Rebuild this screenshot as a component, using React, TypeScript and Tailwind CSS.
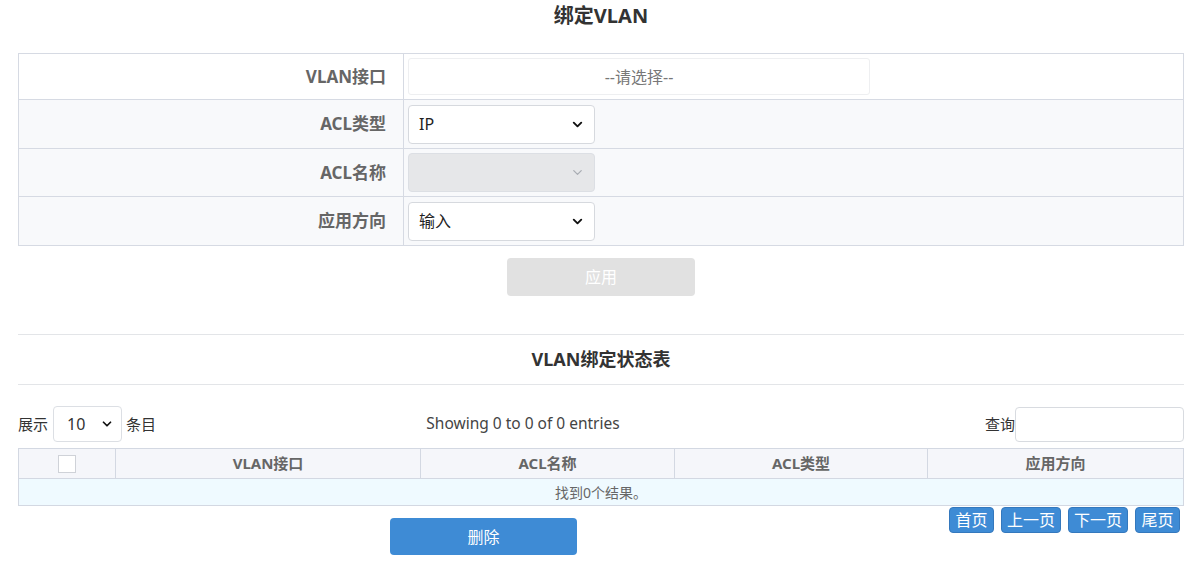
import { ChevronDown } from 'lucide-react';

const font = { fontFamily: '"Noto Sans", "Noto Sans CJK SC", sans-serif' };

function Select({ value, disabled, width }: { value: string; disabled?: boolean; width: string }) {
  return (
    <div className={`relative h-[39px] ${width}`}>
      <div
        className={`flex h-full items-center rounded-[4px] border pl-[10px] text-[16px] ${
          disabled ? 'border-[#dcdfe4] bg-[#e6e7e9]' : 'border-[#d6d9de] bg-white text-[#222]'
        }`}
      >
        {value}
      </div>
      <ChevronDown
        className={`absolute right-[10px] top-[12px] h-[15px] w-[15px] ${disabled ? 'text-[#a9adb3]' : 'text-[#111]'}`}
        strokeWidth={disabled ? 2 : 3}
      />
    </div>
  );
}

function FormRow({ label, children, alt, h }: { label: string; children: React.ReactNode; alt?: boolean; h: string }) {
  return (
    <div className={`flex ${h} ${alt ? 'bg-[#f8f9fb]' : 'bg-white'}`}>
      <div className="flex w-[385px] items-center justify-end border-r border-[#d6dae3] pr-[17px] text-[17px] font-bold text-[#666]">
        {label}
      </div>
      <div className="flex flex-1 items-center pl-[4px]">{children}</div>
    </div>
  );
}

export default function App() {
  const cols = [
    { name: 'VLAN接口', w: 'w-[305px]' },
    { name: 'ACL名称', w: 'w-[254px]' },
    { name: 'ACL类型', w: 'w-[253px]' },
    { name: '应用方向', w: 'flex-1' },
  ];

  const pages = [
    { t: '首页', w: 'w-[45px]' },
    { t: '上一页', w: 'w-[60px]' },
    { t: '下一页', w: 'w-[60px]' },
    { t: '尾页', w: 'w-[45px]' },
  ];

  return (
    <div className="min-h-[562px] w-[1202px] bg-white px-[18px]" style={font}>
      <h1 className="pt-[3px] text-center text-[20px] font-bold leading-[26px] text-[#333]">绑定VLAN</h1>

      <div className="mt-[24px] divide-y divide-[#d6dae3] border border-[#d6dae3]">
        <FormRow label="VLAN接口" h="h-[46px]">
          <div className="flex h-[37px] w-[462px] items-center justify-center rounded-[3px] border border-[#eeeff1] text-[16px] text-[#777]">
            --请选择--
          </div>
        </FormRow>
        <FormRow label="ACL类型" alt h="h-[49px]">
          <Select value="IP" width="w-[187px]" />
        </FormRow>
        <FormRow label="ACL名称" alt h="h-[48px]">
          <Select value="" disabled width="w-[187px]" />
        </FormRow>
        <FormRow label="应用方向" alt h="h-[48px]">
          <Select value="输入" width="w-[187px]" />
        </FormRow>
      </div>

      <div className="mt-[12px] flex justify-center">
        <button className="h-[38px] w-[188px] rounded-[4px] bg-[#e1e1e1] text-[16px] text-white">应用</button>
      </div>

      <div className="mt-[38px] border-t border-[#e3e5e8]" />
      <h2 className="flex h-[49px] items-center justify-center text-[18px] font-bold text-[#333]">VLAN绑定状态表</h2>
      <div className="border-t border-[#e3e5e8]" />

      <div className="mt-[21px] flex h-[36px] items-center text-[15px] text-[#333]">
        <div className="flex w-[300px] items-center">
          <span>展示</span>
          <div className="relative ml-[5px] h-[36px] w-[69px]">
            <div className="flex h-full items-center rounded-[4px] border border-[#dcdfe4] pl-[13px] text-[16px]">10</div>
            <ChevronDown className="absolute right-[8px] top-[11px] h-[14px] w-[14px] text-[#111]" strokeWidth={3} />
          </div>
          <span className="ml-[4px]">条目</span>
        </div>
        <div className="w-[410px] text-center text-[15.5px] text-[#444]">Showing 0 to 0 of 0 entries</div>
        <div className="flex flex-1 items-center justify-end">
          <span>查询</span>
          <div className="h-[35px] w-[169px] rounded-[4px] border border-[#d8dbe0]" />
        </div>
      </div>

      <div className="mt-[6px] border border-[#d3d8e2]">
        <div className="flex h-[29px] bg-[#f5f6fa] text-[15px] font-bold text-[#666]">
          <div className="flex w-[97px] items-center justify-center border-r border-[#d3d8e2]">
            <div className="h-[18px] w-[18px] border border-[#cfd2d8] bg-white" />
          </div>
          {cols.map((c, i) => (
            <div
              key={c.name}
              className={`flex items-center justify-center ${c.w} ${i < cols.length - 1 ? 'border-r border-[#d3d8e2]' : ''}`}
            >
              {c.name}
            </div>
          ))}
        </div>
        <div className="flex h-[27px] items-center justify-center border-t border-[#d3d8e2] bg-[#effaff] text-[14px] text-[#666]">
          找到0个结果。
        </div>
      </div>

      <div className="flex">
        <div className="flex flex-1 justify-center pt-[12px]">
          <button className="h-[37px] w-[187px] rounded-[4px] bg-[#3e8bd5] text-[16px] text-white">删除</button>
        </div>
        <div className="flex gap-[7px] pr-[4px] pt-[1px]">
          {pages.map((p) => (
            <button
              key={p.t}
              className={`h-[26px] ${p.w} rounded-[4px] border border-[#3478bd] bg-[#3e8bd5] text-[16px] leading-none text-white`}
            >
              {p.t}
            </button>
          ))}
        </div>
      </div>
    </div>
  );
}
